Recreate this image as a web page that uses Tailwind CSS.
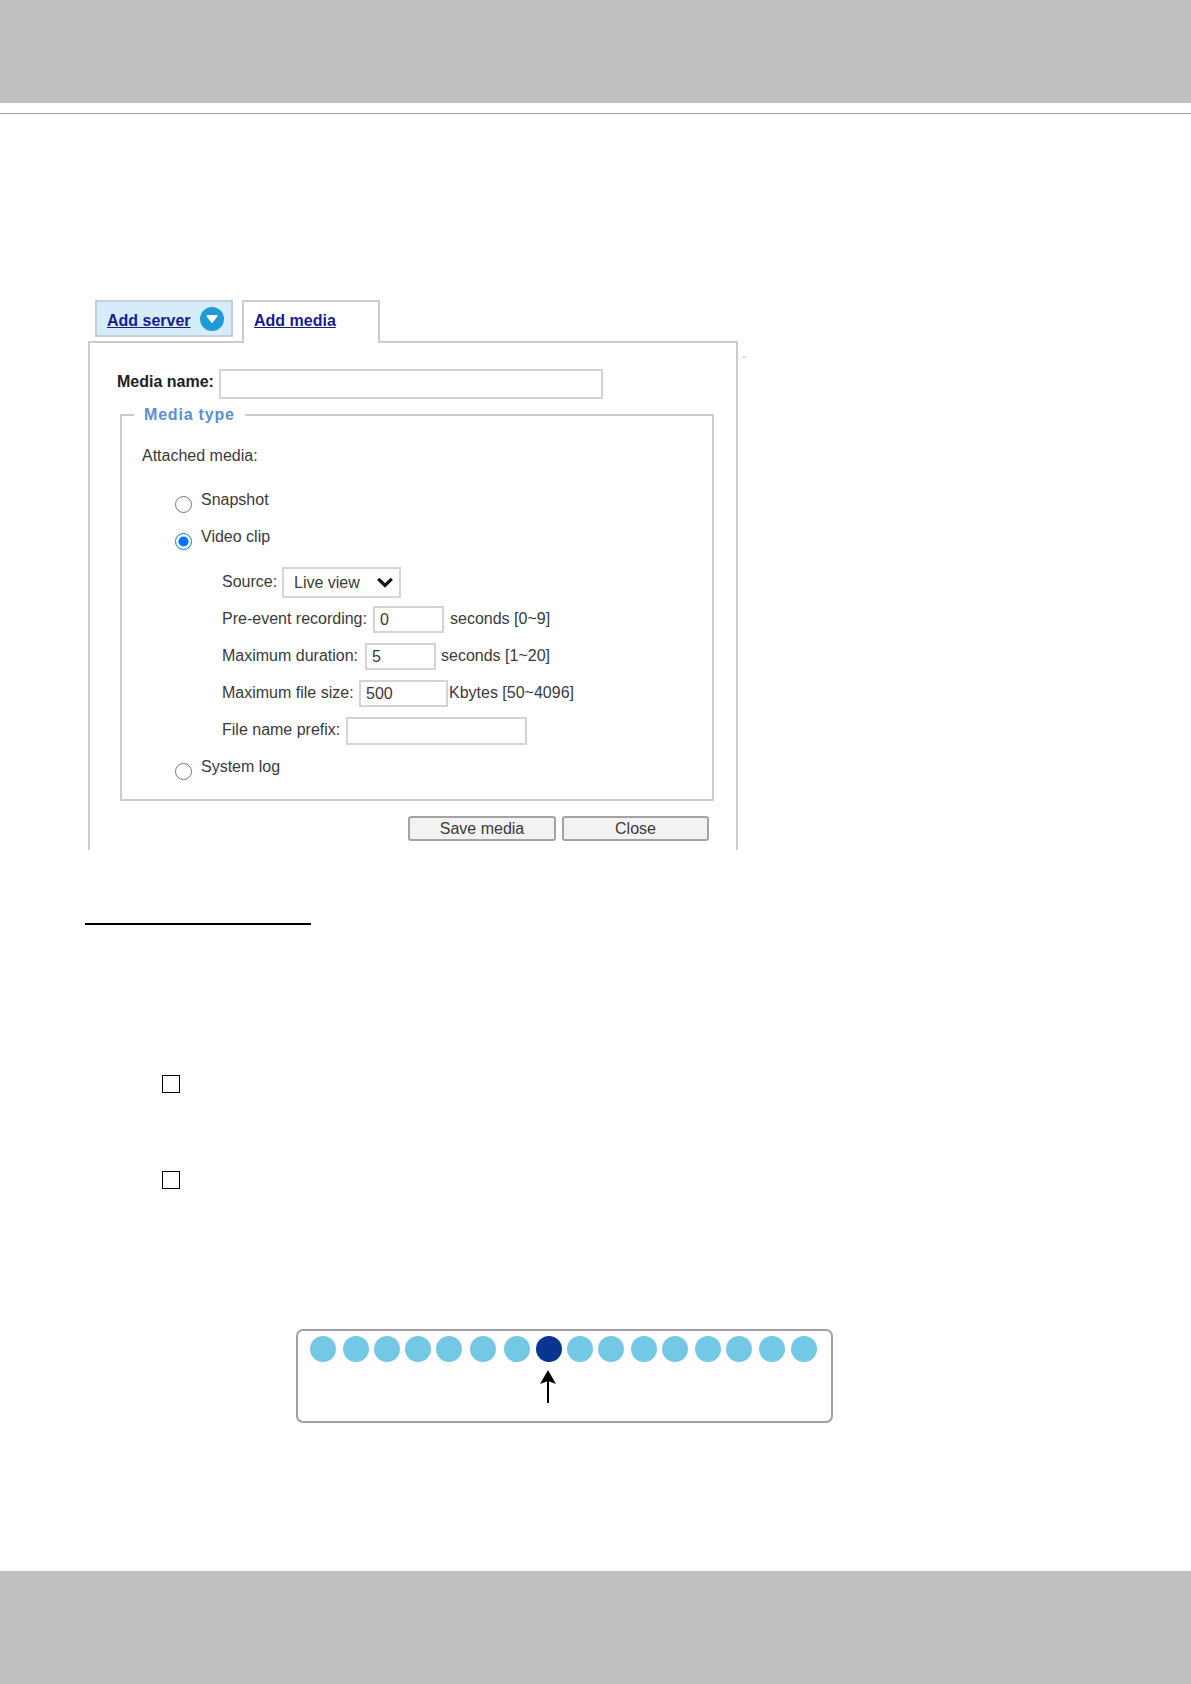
<!DOCTYPE html>
<html lang="en">
<head>
    <meta charset="UTF-8">
    <title>Add media</title>
    <script src="https://cdn.jsdelivr.net/npm/@tailwindcss/browser@4"></script>
</head>
<body class="bg-white font-['Liberation_Sans',Arial,sans-serif] text-[16px] leading-[20px] text-[#3a3a3a]">
    <div class="flex flex-col w-[1191px] h-[1684px] overflow-hidden">
        <!-- Page header band -->
        <div class="h-[103px] bg-[#c0c0c0]"></div>
        <div class="mt-[10px] h-[1px] bg-[#9f9f9f]"></div>

        <!-- Tabs -->
        <div class="mt-[186px] ml-[95px] flex items-start gap-[9px] h-[41px]">
            <div class="flex items-center w-[138px] h-[37px] pl-[10px] bg-[#d5edfb] border-2 border-[#c4ced6]">
                <a href="#" class="mt-[4px] font-bold text-[#1b1b8f] underline">Add server</a>
                <svg class="ml-[9px]" width="24" height="24" viewBox="0 0 24 24">
                    <circle cx="12" cy="12" r="12" fill="#1f9ad6"/>
                    <path d="M7.5 9 H16.5 L12 15 Z" fill="#fff" stroke="#fff" stroke-width="2" stroke-linejoin="round"/>
                </svg>
            </div>
            <div class="relative z-10 flex items-center w-[138px] h-[43px] pl-[10px] pb-[3px] bg-white border-2 border-b-0 border-[#cccccc]">
                <a href="#" class="font-bold text-[#1b1b8f] underline">Add media</a>
            </div>
        </div>

        <!-- Form panel -->
        <div class="relative ml-[88px] w-[650px] h-[509px] border-2 border-b-0 border-[#cccccc] pt-[26px] pl-[27px]">
            <div class="absolute left-[653px] top-[13px] w-[2px] h-[2px] bg-[#d4d4d4]"></div>
            <div class="flex items-center">
                <label class="w-[102px] pb-[4px] font-bold text-[#222]">Media name:</label>
                <input type="text" class="w-[384px] h-[30px] border-2 border-[#d4d4d8] bg-white">
            </div>

            <fieldset class="mt-[6px] ml-[3px] w-[594px] h-[396px] border-2 border-[#cccccc] pl-[20px]">
                <legend class="ml-[-8px] px-[10px] font-bold tracking-[0.8px] text-[#5b8fd3]">Media type</legend>
                <p class="mt-[21px]">Attached media:</p>

                <div class="flex items-start mt-[24px] ml-[33px]">
                    <input type="radio" name="media" class="w-[17px] h-[17px] m-0 mt-[6px]">
                    <span class="ml-[9px]">Snapshot</span>
                </div>
                <div class="flex items-start mt-[14px] ml-[33px]">
                    <input type="radio" name="media" checked class="w-[17px] h-[17px] m-0 mt-[6px]">
                    <span class="ml-[9px]">Video clip</span>
                </div>

                <div class="ml-[80px]">
                    <div class="flex items-center mt-[17px]">
                        <label class="w-[60px] pb-[2px]">Source:</label>
                        <div class="relative">
                            <select class="block appearance-none w-[119px] h-[31px] pl-[10px] border-2 border-[#d4d4d8] bg-white text-[16px]">
                                <option>Live view</option>
                            </select>
                            <svg class="absolute left-[95px] top-[10px] pointer-events-none" width="16" height="11" viewBox="0 0 16 11">
                                <path d="M1.2 1.8 L8 8.4 L14.8 1.8" fill="none" stroke="#111" stroke-width="3.2"/>
                            </svg>
                        </div>
                    </div>
                    <div class="flex items-center mt-[8px]">
                        <label class="w-[151px] pb-[2px]">Pre-event recording:</label>
                        <input type="text" value="0" class="w-[71px] h-[27px] px-[5px] border-2 border-[#d4d4d8]">
                        <span class="ml-[6px] pb-[2px]">seconds [0~9]</span>
                    </div>
                    <div class="flex items-center mt-[10px]">
                        <label class="w-[143px] pb-[2px]">Maximum duration:</label>
                        <input type="text" value="5" class="w-[71px] h-[27px] px-[5px] border-2 border-[#d4d4d8]">
                        <span class="ml-[5px] pb-[2px]">seconds [1~20]</span>
                    </div>
                    <div class="flex items-center mt-[10px]">
                        <label class="w-[137px] pb-[2px]">Maximum file size:</label>
                        <input type="text" value="500" class="w-[89px] h-[27px] px-[5px] border-2 border-[#d4d4d8]">
                        <span class="ml-[1px] pb-[2px]">Kbytes [50~4096]</span>
                    </div>
                    <div class="flex items-center mt-[10px]">
                        <label class="w-[124px] pb-[2px]">File name prefix:</label>
                        <input type="text" class="w-[181px] h-[28px] px-[5px] border-2 border-[#d4d4d8]">
                    </div>
                </div>

                <div class="flex items-start mt-[12px] ml-[33px]">
                    <input type="radio" name="media" class="w-[17px] h-[17px] m-0 mt-[6px]">
                    <span class="ml-[9px]">System log</span>
                </div>
            </fieldset>

            <div class="flex justify-end gap-[6px] mt-[15px] ml-[3px] w-[594px] pr-[5px]">
                <button class="w-[148px] h-[25px] bg-[#f2f2f2] border-2 border-[#a3a3a3] rounded-[3px]">Save media</button>
                <button class="w-[147px] h-[25px] bg-[#f2f2f2] border-2 border-[#a3a3a3] rounded-[3px]">Close</button>
            </div>
        </div>

        <!-- Section rule and checkboxes -->
        <div class="mt-[73px] ml-[85px] w-[226px] h-[2px] bg-black"></div>
        <div class="mt-[150px] ml-[162px] w-[18px] h-[18px] border border-black"></div>
        <div class="mt-[78px] ml-[162px] w-[18px] h-[18px] border border-black"></div>

        <!-- Buffer diagram -->
        <div class="mt-[140px] ml-[296px] w-[537px] h-[94px] border-2 border-[#a0a0a0] rounded-[7px] pt-[5px] pl-[12px]">
            <div class="flex">
                <div class="w-[26px] h-[26px] rounded-full bg-[#73c8e4]"></div>
                <div class="ml-[7px] w-[26px] h-[26px] rounded-full bg-[#73c8e4]"></div>
                <div class="ml-[5px] w-[26px] h-[26px] rounded-full bg-[#73c8e4]"></div>
                <div class="ml-[5px] w-[26px] h-[26px] rounded-full bg-[#73c8e4]"></div>
                <div class="ml-[5px] w-[26px] h-[26px] rounded-full bg-[#73c8e4]"></div>
                <div class="ml-[8px] w-[26px] h-[26px] rounded-full bg-[#73c8e4]"></div>
                <div class="ml-[8px] w-[26px] h-[26px] rounded-full bg-[#73c8e4]"></div>
                <div class="ml-[6px] w-[26px] h-[26px] rounded-full bg-[#083591]"></div>
                <div class="ml-[5px] w-[26px] h-[26px] rounded-full bg-[#73c8e4]"></div>
                <div class="ml-[5px] w-[26px] h-[26px] rounded-full bg-[#73c8e4]"></div>
                <div class="ml-[7px] w-[26px] h-[26px] rounded-full bg-[#73c8e4]"></div>
                <div class="ml-[5px] w-[26px] h-[26px] rounded-full bg-[#73c8e4]"></div>
                <div class="ml-[7px] w-[26px] h-[26px] rounded-full bg-[#73c8e4]"></div>
                <div class="ml-[5px] w-[26px] h-[26px] rounded-full bg-[#73c8e4]"></div>
                <div class="ml-[7px] w-[26px] h-[26px] rounded-full bg-[#73c8e4]"></div>
                <div class="ml-[6px] w-[26px] h-[26px] rounded-full bg-[#73c8e4]"></div>
            </div>
            <svg class="mt-[7px] ml-[229px]" width="18" height="34" viewBox="0 0 18 34">
                <path d="M9 1 L17 15 L9 12 L1 15 Z" fill="#000"/>
                <path d="M9 10 V34" stroke="#000" stroke-width="2"/>
            </svg>
        </div>

        <!-- Page footer band -->
        <div class="mt-[148px] h-[113px] bg-[#c0c0c0]"></div>
    </div>
</body>
</html>
